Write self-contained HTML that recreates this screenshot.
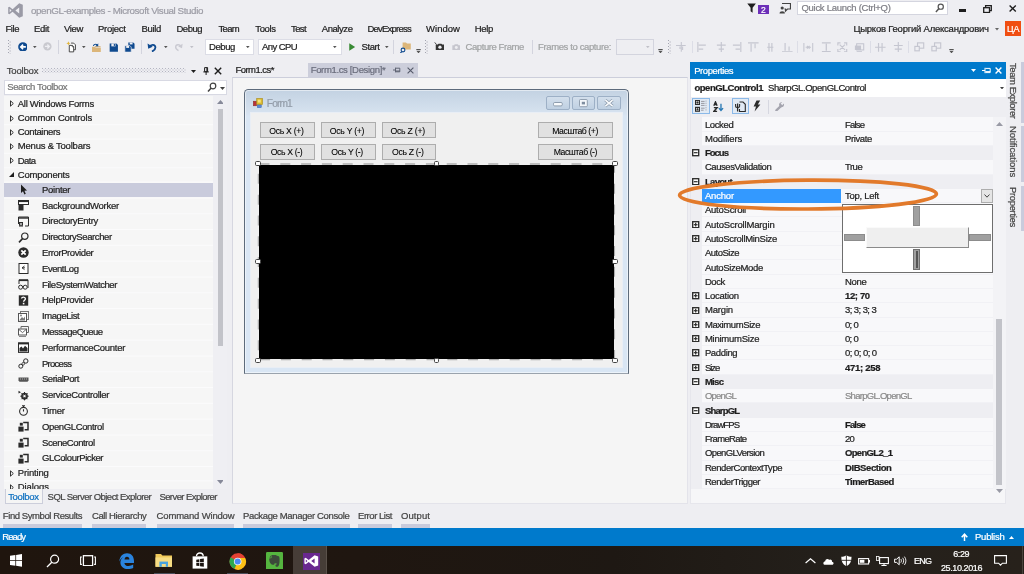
<!DOCTYPE html>
<html><head><meta charset="utf-8"><title>openGL-examples - Microsoft Visual Studio</title>
<style>
*{box-sizing:border-box;margin:0;padding:0}
html,body{width:1024px;height:574px;overflow:hidden;background:#eeeef2}
body{font-family:"Liberation Sans",sans-serif;font-size:9.5px;color:#1e1e1e}
#root{position:relative;width:1024px;height:574px;background:#eeeef2;overflow:hidden;will-change:transform}
.a{position:absolute}
.t{position:absolute;white-space:nowrap;line-height:12px;height:12px;-webkit-text-stroke:0.22px currentColor}
</style></head><body>
<div id="root">
<svg class="a" style="left:6.6px;top:2.4px;" width="17" height="17" viewBox="0 0 17 17"><path d="M12.2 1.2 L15.8 2.8 L15.8 14.2 L12.2 15.8 L5.6 9.8 L2.4 12.3 L1.2 11.7 L1.2 5.3 L2.4 4.7 L5.6 7.2 Z M12.2 5.4 L8.4 8.5 L12.2 11.6 Z M2.7 6.8 L2.7 10.2 L4.5 8.5 Z" fill="#9a9aa6" fill-rule="evenodd"/></svg>
<svg class="a" style="left:747.2px;top:3.2px;" width="9.2" height="10.2" viewBox="0 0 9.2 10.2"><path d="M0.3 0.6 H8.9 L5.6 4.8 V9.8 L3.6 8.2 V4.8 Z" fill="#1e1e1e"/></svg>
<div class="a" style="left:758px;top:5px;width:10.6px;height:9.2px;background:#6c2fb8;"></div>
<svg class="a" style="left:778.6px;top:2.4px;" width="12.4" height="11.4" viewBox="0 0 12.4 11.4"><path d="M3 1.5 H11.5 V7 H8.5 L6.5 9 V7 H5.5" fill="none" stroke="#424242" stroke-width="1.2"/><circle cx="3.2" cy="6" r="1.6" fill="#424242"/><path d="M0.5 11.5 C0.5 8.6 5.9 8.6 5.9 11.5 Z" fill="#424242"/></svg>
<div class="a" style="left:797.2px;top:1px;width:150.4px;height:14.4px;background:#fff;border:1px solid #d4d5df"></div>
<svg class="a" style="left:935px;top:2.6px;" width="9.6" height="10.4" viewBox="0 0 11 12"><circle cx="6.6" cy="4.2" r="3" fill="none" stroke="#555" stroke-width="1.4"/><path d="M4.6 6.4 L1 10.4" stroke="#555" stroke-width="1.7"/></svg>
<div class="a" style="left:959px;top:9px;width:7.3px;height:2.6px;background:#1e1e1e;"></div>
<svg class="a" style="left:983.4px;top:4.5px;" width="9" height="8.2" viewBox="0 0 9 8.2"><path d="M2.6 2.4 V0.7 H8.3 V5.6 H6.8" fill="none" stroke="#1e1e1e" stroke-width="1.3"/><rect x="0.7" y="2.7" width="5.8" height="4.8" fill="none" stroke="#1e1e1e" stroke-width="1.3"/></svg>
<svg class="a" style="left:1009.4px;top:5.4px;" width="7.4" height="7" viewBox="0 0 7.4 7"><path d="M0.6 0.6 L6.8 6.4 M6.8 0.6 L0.6 6.4" stroke="#1e1e1e" stroke-width="1.4"/></svg>
<svg class="a" style="left:995.4px;top:28.2px;" width="4" height="2.4" viewBox="0 0 4 2.4"><path d="M0 0 H4 L2 2.4 Z" fill="#666"/></svg>
<div class="a" style="left:1005.3px;top:21.4px;width:15.7px;height:14.8px;background:#f04e12;"></div>
<svg class="a" style="left:7.6px;top:40px;" width="3" height="14" viewBox="0 0 3 14"><rect x="0" y="0" width="1" height="1" fill="#a3a4b0"/><rect x="1.6" y="1.5" width="1" height="1" fill="#a3a4b0"/><rect x="0" y="3" width="1" height="1" fill="#a3a4b0"/><rect x="1.6" y="4.5" width="1" height="1" fill="#a3a4b0"/><rect x="0" y="6" width="1" height="1" fill="#a3a4b0"/><rect x="1.6" y="7.5" width="1" height="1" fill="#a3a4b0"/><rect x="0" y="9" width="1" height="1" fill="#a3a4b0"/><rect x="1.6" y="10.5" width="1" height="1" fill="#a3a4b0"/><rect x="0" y="12" width="1" height="1" fill="#a3a4b0"/><rect x="1.6" y="13.5" width="1" height="1" fill="#a3a4b0"/></svg>
<svg class="a" style="left:17.5px;top:41.6px;" width="9.8" height="9.8" viewBox="0 0 11 11"><circle cx="5.5" cy="5.5" r="5.3" fill="#0f4a8f"/><path d="M8.8 5.5 H3.4 M5.7 2.9 L3.1 5.5 L5.7 8.1" stroke="#fff" stroke-width="1.8" fill="none"/></svg>
<svg class="a" style="left:33.3px;top:46.3px;" width="3.6" height="2.2" viewBox="0 0 5 3"><path d="M0 0 H5 L2.5 3 Z" fill="#555"/></svg>
<svg class="a" style="left:43.1px;top:42.1px;" width="8.8" height="8.8" viewBox="0 0 11 11"><circle cx="5.5" cy="5.5" r="5.2" fill="#c9c9cf"/><path d="M2.4 5.5 H7.6 M5.4 3 L7.9 5.5 L5.4 8" stroke="#eeeef2" stroke-width="1.7" fill="none"/></svg>
<div class="a" style="left:58.2px;top:40px;width:1px;height:14px;background:#d3d4de;"></div>
<svg class="a" style="left:65.6px;top:41.4px;" width="10.8" height="11.4" viewBox="0 0 12 13"><path d="M5.6 2.4 H8.6 L10.6 4.4 V10 H5.6" fill="#fff" stroke="#333" stroke-width="1"/><path d="M3.6 5 H7.2 L8.6 6.4 V12.4 H3.6 Z" fill="#fff" stroke="#333" stroke-width="1"/><path d="M7 5 V6.6 H8.6" fill="none" stroke="#333" stroke-width="0.8"/><path d="M2.6 0.2 L3.3 1.9 L5 2.6 L3.3 3.3 L2.6 5 L1.9 3.3 L0.2 2.6 L1.9 1.9 Z" fill="#e2b53a"/></svg>
<svg class="a" style="left:82.3px;top:46.3px;" width="3.6" height="2.2" viewBox="0 0 5 3"><path d="M0 0 H5 L2.5 3 Z" fill="#555"/></svg>
<svg class="a" style="left:91.4px;top:41.8px;" width="10.8" height="10.4" viewBox="0 0 13 13"><path d="M1 6 H4.6 L5.6 7 H12 V12.4 H1 Z" fill="#dcb67a"/><path d="M4.4 6.4 H11.6 V5.2 H5.4 Z" fill="#c9a265"/><path d="M2.2 5 C2.6 2.2 5.8 1.2 7.8 2.8 L8.8 1.6 V5.2 H5.2 L6.5 4 C5.4 3.2 3.8 3.6 3.4 5 Z" fill="#0f4a8f"/></svg>
<svg class="a" style="left:108.5px;top:42.6px;" width="9.6" height="9.2" viewBox="0 0 12 12"><path d="M0.6 0.6 H9.4 L11.4 2.6 V11.4 H0.6 Z" fill="#0f4a8f"/><rect x="2.8" y="0.6" width="5.4" height="3.8" fill="#eeeef2"/><rect x="6" y="1.2" width="1.5" height="2.6" fill="#0f4a8f"/></svg>
<svg class="a" style="left:124px;top:41.6px;" width="11.4" height="10.6" viewBox="0 0 14 14"><path d="M5.2 0.6 H11.6 L13.4 2.4 V8.8 H5.2 Z" fill="#0f4a8f"/><rect x="7" y="0.6" width="3.8" height="2.6" fill="#eeeef2"/><path d="M0.6 4.8 H7.2 L9 6.6 V13.4 H0.6 Z" fill="#0f4a8f" stroke="#eeeef2" stroke-width="0.9"/><rect x="2.4" y="5.2" width="3.8" height="2.6" fill="#eeeef2"/></svg>
<div class="a" style="left:141px;top:40px;width:1px;height:14px;background:#d3d4de;"></div>
<svg class="a" style="left:147px;top:42px;" width="10.4" height="10.2" viewBox="0 0 13 13"><path d="M3.4 6.2 C4.6 2.6 10.4 2.6 10.6 6.8 C10.7 9.6 8.4 11 6.2 12.2" fill="none" stroke="#0f4a8f" stroke-width="2.3"/><path d="M0.6 2 L1.4 8.6 L7.2 6 Z" fill="#0f4a8f"/></svg>
<svg class="a" style="left:164.3px;top:46.3px;" width="3.6" height="2.2" viewBox="0 0 5 3"><path d="M0 0 H5 L2.5 3 Z" fill="#555"/></svg>
<svg class="a" style="left:174.4px;top:42.2px;" width="9" height="9.6" viewBox="0 0 13 13"><path d="M9.8 6.2 C8.5 2.5 2.5 2.6 2.4 6.8 C2.3 9.5 4.5 11 6.5 12" fill="none" stroke="#cacad2" stroke-width="2"/><path d="M12.4 2.2 L11.6 8.6 L6 6 Z" fill="#cacad2"/></svg>
<svg class="a" style="left:190.3px;top:46.3px;" width="3.6" height="2.2" viewBox="0 0 5 3"><path d="M0 0 H5 L2.5 3 Z" fill="#c0c0c8"/></svg>
<div class="a" style="left:205px;top:39px;width:49px;height:16px;background:#fff;border:1px solid #dcdde6"></div>
<svg class="a" style="left:246.3px;top:46.3px;" width="3.6" height="2.2" viewBox="0 0 5 3"><path d="M0 0 H5 L2.5 3 Z" fill="#555"/></svg>
<div class="a" style="left:258px;top:39px;width:84px;height:16px;background:#fff;border:1px solid #dcdde6"></div>
<svg class="a" style="left:333.3px;top:46.3px;" width="3.6" height="2.2" viewBox="0 0 5 3"><path d="M0 0 H5 L2.5 3 Z" fill="#555"/></svg>
<svg class="a" style="left:349.4px;top:42.8px;" width="6.4" height="8" viewBox="0 0 8 10"><path d="M0.3 0.3 L7.7 5 L0.3 9.7 Z" fill="#388a34"/></svg>
<svg class="a" style="left:385.3px;top:46.3px;" width="3.6" height="2.2" viewBox="0 0 5 3"><path d="M0 0 H5 L2.5 3 Z" fill="#555"/></svg>
<div class="a" style="left:393px;top:40px;width:1px;height:14px;background:#d3d4de;"></div>
<svg class="a" style="left:399.6px;top:41.6px;" width="11" height="11.2" viewBox="0 0 11 11.2"><path d="M2.6 0.4 H6 L7 1.4 H10.8 V7.6 H2.6 Z" fill="#dcb67a"/><circle cx="3" cy="8" r="1.9" fill="#eeeef2" stroke="#0f4a8f" stroke-width="1.1"/><path d="M1.8 9.6 L0.4 11" stroke="#0f4a8f" stroke-width="1.2"/></svg>
<svg class="a" style="left:416.2px;top:48.8px;" width="5" height="4.4" viewBox="0 0 5 5"><path d="M0 0 H5 V1 H0 Z M0 2 H5 L2.5 5 Z" fill="#555"/></svg>
<svg class="a" style="left:424.6px;top:40px;" width="3" height="14" viewBox="0 0 3 14"><rect x="0" y="0" width="1" height="1" fill="#a3a4b0"/><rect x="1.6" y="1.5" width="1" height="1" fill="#a3a4b0"/><rect x="0" y="3" width="1" height="1" fill="#a3a4b0"/><rect x="1.6" y="4.5" width="1" height="1" fill="#a3a4b0"/><rect x="0" y="6" width="1" height="1" fill="#a3a4b0"/><rect x="1.6" y="7.5" width="1" height="1" fill="#a3a4b0"/><rect x="0" y="9" width="1" height="1" fill="#a3a4b0"/><rect x="1.6" y="10.5" width="1" height="1" fill="#a3a4b0"/><rect x="0" y="12" width="1" height="1" fill="#a3a4b0"/><rect x="1.6" y="13.5" width="1" height="1" fill="#a3a4b0"/></svg>
<svg class="a" style="left:433.6px;top:41.8px;" width="10.4" height="8.2" viewBox="0 0 12 9.5"><path d="M0.6 0.4 L3 2.8" stroke="#333" stroke-width="1.1"/><path d="M2 3 H4.4 L5.2 2 H8.6 L9.4 3 H11.6 V9.2 H2 Z" fill="#333"/><circle cx="6.9" cy="6" r="1.9" fill="#eeeef2"/></svg>
<svg class="a" style="left:451.6px;top:43.8px;" width="8.6" height="6.2" viewBox="0 0 10 7.2"><path d="M0.4 1.4 H2.4 L3.2 0.4 H6.8 L7.6 1.4 H9.6 V7 H0.4 Z" fill="#c6c6ce"/><circle cx="5" cy="4.1" r="1.7" fill="#eeeef2"/></svg>
<div class="a" style="left:532px;top:40px;width:1px;height:14px;background:#d3d4de;"></div>
<div class="a" style="left:616px;top:39px;width:38px;height:16px;background:#eeeef2;border:1px solid #d3d4de"></div>
<svg class="a" style="left:646.3px;top:46.3px;" width="3.6" height="2.2" viewBox="0 0 5 3"><path d="M0 0 H5 L2.5 3 Z" fill="#c0c0c8"/></svg>
<svg class="a" style="left:658.4px;top:48.8px;" width="5" height="4.4" viewBox="0 0 5 5"><path d="M0 0 H5 V1 H0 Z M0 2 H5 L2.5 5 Z" fill="#555"/></svg>
<svg class="a" style="left:668px;top:40px;" width="3" height="14" viewBox="0 0 3 14"><rect x="0" y="0" width="1" height="1" fill="#a3a4b0"/><rect x="1.6" y="1.5" width="1" height="1" fill="#a3a4b0"/><rect x="0" y="3" width="1" height="1" fill="#a3a4b0"/><rect x="1.6" y="4.5" width="1" height="1" fill="#a3a4b0"/><rect x="0" y="6" width="1" height="1" fill="#a3a4b0"/><rect x="1.6" y="7.5" width="1" height="1" fill="#a3a4b0"/><rect x="0" y="9" width="1" height="1" fill="#a3a4b0"/><rect x="1.6" y="10.5" width="1" height="1" fill="#a3a4b0"/><rect x="0" y="12" width="1" height="1" fill="#a3a4b0"/><rect x="1.6" y="13.5" width="1" height="1" fill="#a3a4b0"/></svg>
<svg class="a" style="left:676px;top:41.8px;" width="10.6" height="10.6" viewBox="0 0 12 12"><path d="M0 4 H11 M6 0 V11 M7.5 5 V9 M4.5 5 V8" stroke="#c5c6d0" stroke-width="1.2" fill="none"/></svg>
<div class="a" style="left:692px;top:41px;width:1px;height:12px;background:#dcdde6;"></div>
<svg class="a" style="left:697px;top:41.8px;" width="10.6" height="10.6" viewBox="0 0 12 12"><path d="M1 0 V12 M2 3.5 H10 M2 8 H7" stroke="#c5c6d0" stroke-width="1.3" fill="none"/></svg>
<svg class="a" style="left:716px;top:41.8px;" width="10.6" height="10.6" viewBox="0 0 12 12"><path d="M6 0 V12 M1 3.5 H11 M3 8 H9" stroke="#c5c6d0" stroke-width="1.3" fill="none"/></svg>
<svg class="a" style="left:732px;top:41.8px;" width="10.6" height="10.6" viewBox="0 0 12 12"><path d="M10 0 V12 M1 3.5 H9 M4 8 H9" stroke="#c5c6d0" stroke-width="1.3" fill="none"/></svg>
<svg class="a" style="left:748px;top:41.8px;" width="10.6" height="10.6" viewBox="0 0 12 12"><path d="M0 1 H12 M3.5 2 V11 M8 2 V7" stroke="#c5c6d0" stroke-width="1.3" fill="none"/></svg>
<svg class="a" style="left:765.4px;top:41.8px;" width="10.6" height="10.6" viewBox="0 0 12 12"><path d="M2.5 6 H9.5 M4.5 1 V11 M7.8 1 V11" stroke="#c5c6d0" stroke-width="1.3" fill="none"/></svg>
<svg class="a" style="left:782px;top:41.8px;" width="10.6" height="10.6" viewBox="0 0 12 12"><path d="M0 11 H12 M3.5 1 V10 M8 5 V10" stroke="#c5c6d0" stroke-width="1.3" fill="none"/></svg>
<div class="a" style="left:797px;top:41px;width:1px;height:12px;background:#dcdde6;"></div>
<svg class="a" style="left:803px;top:41.8px;" width="10.6" height="10.6" viewBox="0 0 12 12"><path d="M1 1 V11 M11 1 V11 M3 6 H9 M4.5 4.5 L7.5 7.5 M7.5 4.5 L4.5 7.5" stroke="#c5c6d0" stroke-width="1.2" fill="none"/></svg>
<svg class="a" style="left:821px;top:41.8px;" width="10.6" height="10.6" viewBox="0 0 12 12"><path d="M1 1 H11 M1 11 H11 M6 2 V10" stroke="#c5c6d0" stroke-width="1.4" fill="none"/></svg>
<svg class="a" style="left:837px;top:41.8px;" width="10.6" height="10.6" viewBox="0 0 12 12"><path d="M1 4 V1 H4 M8 1 H11 V4 M11 8 V11 H8 M4 11 H1 V8 M3 3 L9 9 M9 3 L3 9" stroke="#c5c6d0" stroke-width="1.3" fill="none"/></svg>
<svg class="a" style="left:854px;top:41.8px;" width="10.6" height="10.6" viewBox="0 0 12 12"><rect x="3" y="2" width="8" height="7" fill="none" stroke="#c5c6d0" stroke-width="1.2"/><rect x="1" y="4" width="7" height="5" fill="#c5c6d0"/><path d="M3 11 H9" stroke="#c5c6d0" stroke-width="1.2"/></svg>
<div class="a" style="left:870px;top:41px;width:1px;height:12px;background:#dcdde6;"></div>
<svg class="a" style="left:875px;top:41.8px;" width="10.6" height="10.6" viewBox="0 0 12 12"><path d="M0 6 H12 M4 1 V11 M8 1 V11" stroke="#c5c6d0" stroke-width="1.3" fill="none"/></svg>
<svg class="a" style="left:892.5px;top:41.8px;" width="10.6" height="10.6" viewBox="0 0 12 12"><path d="M6 0 V12 M1 4 H11 M2 8 H10" stroke="#c5c6d0" stroke-width="1.3" fill="none"/></svg>
<div class="a" style="left:908px;top:41px;width:1px;height:12px;background:#dcdde6;"></div>
<svg class="a" style="left:914px;top:41.8px;" width="10.6" height="10.6" viewBox="0 0 12 12"><rect x="4" y="1" width="7" height="6" fill="none" stroke="#c5c6d0" stroke-width="1.3"/><rect x="1" y="5" width="5" height="5" fill="#eeeef2" stroke="#c5c6d0" stroke-width="1.3"/></svg>
<svg class="a" style="left:931px;top:41.8px;" width="10.6" height="10.6" viewBox="0 0 12 12"><rect x="4" y="1" width="7" height="6" fill="none" stroke="#c5c6d0" stroke-width="1.3"/><rect x="1" y="5" width="5" height="5" fill="#eeeef2" stroke="#c5c6d0" stroke-width="1.3"/></svg>
<svg class="a" style="left:948.6px;top:48.8px;" width="5" height="4.4" viewBox="0 0 5 5"><path d="M0 0 H5 V1 H0 Z M0 2 H5 L2.5 5 Z" fill="#555"/></svg>
<div class="a" style="left:42px;top:68px;width:144px;height:5px;background-image:radial-gradient(circle at 0.5px 0.5px,#b4b5c2 0.55px,transparent 0.7px),radial-gradient(circle at 0.5px 0.5px,#b4b5c2 0.55px,transparent 0.7px);background-size:3px 3px,3px 3px;background-position:0 0,1.5px 1.5px"></div>
<svg class="a" style="left:191px;top:70px;" width="5" height="3" viewBox="0 0 5 3"><path d="M0 0 H5 L2.5 3 Z" fill="#1e1e1e"/></svg>
<svg class="a" style="left:203.2px;top:66.6px;" width="6.2" height="8.6" viewBox="0 0 6.2 8.6"><path d="M1.6 0.6 H4.6 V4.7 H1.6 Z M3.9 0.6 V4.7 M0.3 4.9 H5.9 M3.1 4.9 V8.4" stroke="#1e1e1e" stroke-width="1" fill="none"/></svg>
<svg class="a" style="left:214px;top:67px;" width="8" height="8" viewBox="0 0 8 8"><path d="M0.8 0.8 L7.2 7.2 M7.2 0.8 L0.8 7.2" stroke="#1e1e1e" stroke-width="1.4"/></svg>
<div class="a" style="left:4px;top:80px;width:223px;height:14.5px;background:#fff;border:1px solid #d8d9e3"></div>
<svg class="a" style="left:207px;top:82px;" width="10" height="11" viewBox="0 0 10 11"><circle cx="6" cy="4" r="2.8" fill="none" stroke="#424242" stroke-width="1.2"/><path d="M4.2 6 L1 9.6" stroke="#424242" stroke-width="1.5"/></svg>
<svg class="a" style="left:220px;top:87px;" width="5" height="3" viewBox="0 0 5 3"><path d="M0 0 H5 L2.5 3 Z" fill="#424242"/></svg>
<div class="a" style="left:4px;top:96px;width:209px;height:393px;background:#f6f6f6;"></div>
<div class="a" style="left:212.6px;top:96px;width:14.4px;height:393px;background:#efeff3;"></div>
<svg class="a" style="left:217px;top:100.2px;" width="6.4" height="4.2" viewBox="0 0 6.4 4.2"><path d="M0 4 L3.5 0 L7 4 Z" fill="#868999"/></svg>
<svg class="a" style="left:217px;top:480.4px;" width="6.4" height="4.2" viewBox="0 0 6.4 4.2"><path d="M0 0 L3.5 4 L7 0 Z" fill="#868999"/></svg>
<div class="a" style="left:217.6px;top:108.8px;width:5.6px;height:237px;background:#c2c3c9;"></div>
<svg class="a" style="left:4px;top:96px" width="209" height="393" viewBox="0 0 209 393"><path d="M0 14.3 H209 M0 28.7 H209 M0 43.1 H209 M0 57.4 H209 M0 71.8 H209 M0 86.1 H209 M0 102.0 H209 M0 117.8 H209 M0 133.6 H209 M0 149.4 H209 M0 165.2 H209 M0 181.0 H209 M0 196.8 H209 M0 212.6 H209 M0 228.4 H209 M0 244.2 H209 M0 260.0 H209 M0 275.8 H209 M0 291.6 H209 M0 307.4 H209 M0 323.2 H209 M0 339.0 H209 M0 354.8 H209 M0 370.6 H209 M0 384.9 H209 M0 399.2 H209" stroke="#fbfbfc" stroke-width="1"/></svg>
<div class="a" style="left:4px;top:183px;width:208.6px;height:13.8px;background:#c9cbdc;"></div>
<svg class="a" style="left:9.5px;top:100.4px;" width="4" height="7" viewBox="0 0 4 7"><path d="M0.5 0.8 L3.3 3.5 L0.5 6.2 Z" fill="none" stroke="#1e1e1e" stroke-width="0.9"/></svg>
<svg class="a" style="left:9.5px;top:114.5px;" width="4" height="7" viewBox="0 0 4 7"><path d="M0.5 0.8 L3.3 3.5 L0.5 6.2 Z" fill="none" stroke="#1e1e1e" stroke-width="0.9"/></svg>
<svg class="a" style="left:9.5px;top:128.7px;" width="4" height="7" viewBox="0 0 4 7"><path d="M0.5 0.8 L3.3 3.5 L0.5 6.2 Z" fill="none" stroke="#1e1e1e" stroke-width="0.9"/></svg>
<svg class="a" style="left:9.5px;top:142.8px;" width="4" height="7" viewBox="0 0 4 7"><path d="M0.5 0.8 L3.3 3.5 L0.5 6.2 Z" fill="none" stroke="#1e1e1e" stroke-width="0.9"/></svg>
<svg class="a" style="left:9.5px;top:157px;" width="4" height="7" viewBox="0 0 4 7"><path d="M0.5 0.8 L3.3 3.5 L0.5 6.2 Z" fill="none" stroke="#1e1e1e" stroke-width="0.9"/></svg>
<svg class="a" style="left:8.5px;top:172.2px;" width="5" height="5" viewBox="0 0 5 5"><path d="M5 0 V5 H0 Z" fill="#1e1e1e"/></svg>
<svg class="a" style="left:9.5px;top:469.9px;" width="4" height="7" viewBox="0 0 4 7"><path d="M0.5 0.8 L3.3 3.5 L0.5 6.2 Z" fill="none" stroke="#1e1e1e" stroke-width="0.9"/></svg>
<div class="a" style="left:4px;top:479px;width:209px;height:10px;overflow:hidden"><div class="t" style="left:13.8px;top:2.4px;font-size:9.5px;letter-spacing:-0.1px">Dialogs</div><svg class="a" style="left:5.5px;top:4.9px" width="4" height="7" viewBox="0 0 4 7"><path d="M0.5 0.8 L3.3 3.5 L0.5 6.2 Z" fill="none" stroke="#1e1e1e" stroke-width="0.9"/></svg></div>
<svg class="a" style="left:18.2px;top:184.1px;" width="11" height="11" viewBox="0 0 11 11"><path d="M3 0.5 V9 L5 7.2 L6.4 10.4 L7.8 9.8 L6.4 6.7 L9 6.5 Z" fill="#1e1e1e"/></svg>
<svg class="a" style="left:18.2px;top:199.9px;" width="11" height="11" viewBox="0 0 11 11"><rect x="0.5" y="0.5" width="10" height="4" fill="#fff" stroke="#2b2b2b"/><rect x="0.5" y="0.5" width="10" height="1.6" fill="#2b2b2b"/><rect x="0.5" y="5" width="5" height="5.5" fill="#2b2b2b"/></svg>
<svg class="a" style="left:18.2px;top:215.7px;" width="11" height="11" viewBox="0 0 11 11"><path d="M0.5 8 V1 H10.5 V10 H7" fill="none" stroke="#2b2b2b"/><path d="M0.5 2 H10.5" stroke="#2b2b2b" stroke-width="1.4"/><path d="M1 6 H5 V10.5 H1 Z" fill="#2b2b2b"/><path d="M2 7 L4 9.5 M4 7 L2 9.5" stroke="#f6f6f6" stroke-width="0.7"/></svg>
<svg class="a" style="left:18.2px;top:231.5px;" width="11" height="11" viewBox="0 0 11 11"><circle cx="6.8" cy="4.2" r="3.2" fill="none" stroke="#2b2b2b" stroke-width="1.2"/><path d="M4.5 6.6 L1 10.4" stroke="#2b2b2b" stroke-width="1.6"/></svg>
<svg class="a" style="left:18.2px;top:247.3px;" width="11" height="11" viewBox="0 0 11 11"><circle cx="5.5" cy="5.5" r="5.2" fill="#2b2b2b"/><path d="M3.3 3.3 L7.7 7.7 M7.7 3.3 L3.3 7.7" stroke="#fff" stroke-width="1.7"/></svg>
<svg class="a" style="left:18.2px;top:263.1px;" width="11" height="11" viewBox="0 0 11 11"><rect x="1" y="0.5" width="9" height="10" fill="#fff" stroke="#2b2b2b"/><path d="M6.5 3 L4 4.8 L6.5 6.6 M4 4.8 H7" stroke="#2b2b2b" stroke-width="0.9" fill="none"/></svg>
<svg class="a" style="left:18.2px;top:278.9px;" width="11" height="11" viewBox="0 0 11 11"><path d="M1 5 V0.8 H10 V9" fill="none" stroke="#2b2b2b"/><path d="M1 1.4 H10" stroke="#2b2b2b" stroke-width="1.4"/><circle cx="2.6" cy="8.2" r="2" fill="none" stroke="#2b2b2b"/><circle cx="7.2" cy="8.2" r="2" fill="none" stroke="#2b2b2b"/><path d="M4.4 7.6 H5.4" stroke="#2b2b2b"/></svg>
<svg class="a" style="left:18.2px;top:294.7px;" width="11" height="11" viewBox="0 0 11 11"><rect x="0.8" y="0.3" width="9.4" height="10.4" fill="#2b2b2b"/><path d="M3.6 3.6 C3.6 1.6 7.4 1.6 7.4 3.8 C7.4 5.2 5.6 5.2 5.6 6.8" fill="none" stroke="#fff" stroke-width="1.4"/><rect x="4.8" y="7.8" width="1.6" height="1.6" fill="#fff"/></svg>
<svg class="a" style="left:18.2px;top:310.5px;" width="11" height="11" viewBox="0 0 11 11"><rect x="2.5" y="0.5" width="8" height="8" fill="none" stroke="#777"/><rect x="0.5" y="2.5" width="8" height="8" fill="#fff" stroke="#555"/><path d="M1.5 9 L4 6 L5.5 7.5 L7 5.5 V9.5 H1.5 Z" fill="#777"/><circle cx="3" cy="4.5" r="0.9" fill="#777"/></svg>
<svg class="a" style="left:18.2px;top:326.3px;" width="11" height="11" viewBox="0 0 11 11"><path d="M3 2.5 V0.5 H10.5 V6.5 H8.8" fill="none" stroke="#666"/><rect x="0.5" y="3" width="8" height="6" fill="#fff" stroke="#555"/><path d="M0.8 3.4 L4.5 6.6 L8.2 3.4" fill="none" stroke="#555" stroke-width="0.9"/><path d="M1 10.5 H8" stroke="#888"/></svg>
<svg class="a" style="left:18.2px;top:342.1px;" width="11" height="11" viewBox="0 0 11 11"><rect x="0.5" y="0.8" width="10" height="9.6" fill="#fff" stroke="#2b2b2b"/><path d="M0.5 1.6 H10.5" stroke="#2b2b2b" stroke-width="1.6"/><path d="M1.5 9.5 V6 L3.5 4.5 L5 6.5 L7 3.8 L9.5 6 V9.5 Z" fill="#2b2b2b"/></svg>
<svg class="a" style="left:18.2px;top:357.9px;" width="11" height="11" viewBox="0 0 11 11"><circle cx="2.8" cy="8.2" r="2" fill="none" stroke="#2b2b2b"/><circle cx="7.8" cy="3" r="2.2" fill="none" stroke="#2b2b2b"/><path d="M4 6.8 L6.2 4.6" stroke="#2b2b2b"/><circle cx="5.2" cy="5.8" r="1.3" fill="#f6f6f6" stroke="#2b2b2b" stroke-width="0.8"/></svg>
<svg class="a" style="left:18.2px;top:373.7px;" width="11" height="11" viewBox="0 0 11 11"><path d="M0.5 3.5 H10.5 V6.5 L9.5 7.8 H1.5 L0.5 6.5 Z" fill="#555"/><path d="M2 5 H9" stroke="#bbb" stroke-width="0.9" stroke-dasharray="1 1"/></svg>
<svg class="a" style="left:18.2px;top:389.5px;" width="11" height="11" viewBox="0 0 11 11"><path d="M0.5 0.8 L3 2.2 L0.5 3.6 Z" fill="#2b2b2b"/><circle cx="6.5" cy="6.2" r="2.6" fill="none" stroke="#2b2b2b" stroke-width="1.5"/><path d="M6.5 2 V10.4 M2.3 6.2 H10.7 M3.5 3.2 L9.5 9.2 M9.5 3.2 L3.5 9.2" stroke="#2b2b2b" stroke-width="1"/><circle cx="6.5" cy="6.2" r="1.1" fill="#f6f6f6"/></svg>
<svg class="a" style="left:18.2px;top:405.3px;" width="11" height="11" viewBox="0 0 11 11"><circle cx="5.5" cy="6.3" r="3.9" fill="none" stroke="#2b2b2b" stroke-width="1.1"/><path d="M4 0.8 H7 M5.5 1 V2.4 M5.5 4.2 V6.5" stroke="#2b2b2b" stroke-width="1.1"/></svg>
<svg class="a" style="left:18.2px;top:421.1px;" width="11" height="11" viewBox="0 0 11 11"><path d="M5.2 1.6 H10 V8.8 H6.6" fill="none" stroke="#2b2b2b" stroke-width="1.5"/><rect x="0.4" y="5.6" width="5.2" height="5" fill="#2b2b2b"/><rect x="1.8" y="1.8" width="3" height="2.8" fill="#2b2b2b"/></svg>
<svg class="a" style="left:18.2px;top:436.9px;" width="11" height="11" viewBox="0 0 11 11"><path d="M5.2 1.6 H10 V8.8 H6.6" fill="none" stroke="#2b2b2b" stroke-width="1.5"/><rect x="0.4" y="5.6" width="5.2" height="5" fill="#2b2b2b"/><rect x="1.8" y="1.8" width="3" height="2.8" fill="#2b2b2b"/></svg>
<svg class="a" style="left:18.2px;top:452.7px;" width="11" height="11" viewBox="0 0 11 11"><path d="M5.2 1.6 H10 V8.8 H6.6" fill="none" stroke="#2b2b2b" stroke-width="1.5"/><rect x="0.4" y="5.6" width="5.2" height="5" fill="#2b2b2b"/><rect x="1.8" y="1.8" width="3" height="2.8" fill="#2b2b2b"/></svg>
<div class="a" style="left:4.5px;top:489px;width:38.5px;height:15px;background:#f5f5f5;border:1px solid #cccedb;border-top:none"></div>
<div class="a" style="left:2.8px;top:524px;width:79.2px;height:3.5px;background:#c9cbdc;"></div>
<div class="a" style="left:91.9px;top:524px;width:54.6px;height:3.5px;background:#c9cbdc;"></div>
<div class="a" style="left:156.6px;top:524px;width:77.8px;height:3.5px;background:#c9cbdc;"></div>
<div class="a" style="left:243px;top:524px;width:106.5px;height:3.5px;background:#c9cbdc;"></div>
<div class="a" style="left:358px;top:524px;width:34px;height:3.5px;background:#c9cbdc;"></div>
<div class="a" style="left:401px;top:524px;width:29px;height:3.5px;background:#c9cbdc;"></div>
<div class="a" style="left:0px;top:527.6px;width:1024px;height:18.4px;background:#007acc;"></div>
<svg class="a" style="left:960.8px;top:532.6px;" width="7" height="8.4" viewBox="0 0 8 9"><path d="M4 9 V2 M0.8 4.6 L4 1 L7.2 4.6" fill="none" stroke="#fff" stroke-width="1.7"/></svg>
<svg class="a" style="left:1009px;top:535.5px;" width="5" height="3" viewBox="0 0 5 3"><path d="M0 3 H5 L2.5 0 Z" fill="#fff"/></svg>
<div class="a" style="left:307.5px;top:62.5px;width:110px;height:15px;background:#ccceDB;"></div>
<svg class="a" style="left:393px;top:67px;" width="8" height="6" viewBox="0 0 8 6"><path d="M0 3 H2.5 M2.5 0.6 V5.4 M3 1.2 H6.8 V4.8 H3 M3 4 H6.8" stroke="#555a6a" stroke-width="0.9" fill="none"/></svg>
<svg class="a" style="left:407px;top:66.5px;" width="7" height="7" viewBox="0 0 7 7"><path d="M0.6 0.6 L6.4 6.4 M6.4 0.6 L0.6 6.4" stroke="#555a6a" stroke-width="1.1"/></svg>
<div class="a" style="left:232.3px;top:77.3px;width:455.7px;height:426.6px;background:#f5f5f5;border:1px solid #e3e3ea;border-left-color:#d6d7e0;border-top:1.4px solid #ccceDB"></div>
<div class="a" style="left:243.8px;top:88.9px;width:385.1px;height:284.9px;border:1.3px solid #5d6b7b;border-bottom:1px solid #9aa3ad;border-right:1.4px solid #5d6b7b;border-radius:4.5px 4.5px 0 0;background:linear-gradient(#c3d2e2 0,#d7e3f0 24px,#d9e6f4 26px,#d9e6f4 100%)"></div>
<div class="a" style="left:245.1px;top:90.2px;width:382.6px;height:282.5px;border:1px solid rgba(255,255,255,.5);border-radius:3px 3px 0 0"></div>
<div class="a" style="left:249.8px;top:112.2px;width:373.2px;height:256.2px;background:#f0f0f0;border:1px solid #e9eef5"></div>
<svg class="a" style="left:252.6px;top:97.9px;" width="10" height="10.2" viewBox="0 0 10 10.2"><rect x="0.3" y="3.2" width="3.4" height="4.6" fill="#b8323a" stroke="#8a2b22" stroke-width="0.5"/><rect x="3.7" y="0.4" width="5.9" height="6.2" fill="#d9b92f" stroke="#a88a20" stroke-width="0.6"/><rect x="4.8" y="1.6" width="3" height="3" fill="#f6e27a"/><rect x="4.2" y="7" width="4.2" height="2.8" fill="#5b8ad8" stroke="#3c66a8" stroke-width="0.4"/></svg>
<div class="a" style="left:546.4px;top:96.3px;width:23.3px;height:13.4px;border:1px solid #9db0c6;border-radius:2px;background:linear-gradient(#d3dfec,#bfd0e2)"></div>
<div class="a" style="left:571.9px;top:96.3px;width:23.3px;height:13.4px;border:1px solid #9db0c6;border-radius:2px;background:linear-gradient(#d3dfec,#bfd0e2)"></div>
<div class="a" style="left:597.3px;top:96.3px;width:23.3px;height:13.4px;border:1px solid #9db0c6;border-radius:2px;background:linear-gradient(#d3dfec,#bfd0e2)"></div>
<svg class="a" style="left:552.8px;top:102.3px;" width="10" height="4.5" viewBox="0 0 10 4.5"><rect x="0.5" y="0.5" width="8.8" height="3.4" rx="1.2" fill="#f8fafc" stroke="#8594a6" stroke-width="0.9"/></svg>
<svg class="a" style="left:579px;top:99px;" width="9" height="8.5" viewBox="0 0 9 8.5"><rect x="0.5" y="0.5" width="7.8" height="7.2" rx="1" fill="#f4f7fb" stroke="#7f8ea0" stroke-width="0.8"/><rect x="2.8" y="2.8" width="3.2" height="2.6" fill="#7f8ea0"/></svg>
<svg class="a" style="left:604px;top:99px;" width="10" height="8.5" viewBox="0 0 10 8.5"><path d="M1.4 1.2 L8.6 7.2 M8.6 1.2 L1.4 7.2" stroke="#8594a6" stroke-width="3"/><path d="M1.4 1.2 L8.6 7.2 M8.6 1.2 L1.4 7.2" stroke="#f8fafc" stroke-width="1.7"/></svg>
<div class="a" style="left:260.2px;top:122.3px;width:54.4px;height:15.6px;background:#e1e1e1;border:1px solid #adadad"></div>
<div class="a" style="left:320.8px;top:122.3px;width:55px;height:15.6px;background:#e1e1e1;border:1px solid #adadad"></div>
<div class="a" style="left:381.8px;top:122.3px;width:54.6px;height:15.6px;background:#e1e1e1;border:1px solid #adadad"></div>
<div class="a" style="left:260.2px;top:144.3px;width:54.4px;height:15.4px;background:#e1e1e1;border:1px solid #adadad"></div>
<div class="a" style="left:320.8px;top:144.3px;width:55px;height:15.4px;background:#e1e1e1;border:1px solid #adadad"></div>
<div class="a" style="left:381.8px;top:144.3px;width:54.6px;height:15.4px;background:#e1e1e1;border:1px solid #adadad"></div>
<div class="a" style="left:538.1px;top:122.3px;width:74.7px;height:15.6px;background:#e1e1e1;border:1px solid #adadad"></div>
<div class="a" style="left:538.1px;top:144.3px;width:74.7px;height:15.4px;background:#e1e1e1;border:1px solid #adadad"></div>
<svg class="a" style="left:256px;top:161px;" width="362" height="202" viewBox="0 0 362 202"><rect x="2.5" y="3.05" width="355.8" height="195.4" fill="none" stroke="#adadad" stroke-width="1.5" stroke-dasharray="10 10.8" stroke-dashoffset="-1"/></svg>
<div class="a" style="left:259px;top:164.8px;width:354.6px;height:193.8px;background:#000;"></div>
<div class="a" style="left:255.3px;top:161.2px;width:5.4px;height:5.2px;background:#fff;border:1px solid #444;border-radius:1.6px"></div>
<div class="a" style="left:255.3px;top:259.2px;width:5.4px;height:5.2px;background:#fff;border:1px solid #444;border-radius:1.6px"></div>
<div class="a" style="left:255.3px;top:357.8px;width:5.4px;height:5.2px;background:#fff;border:1px solid #444;border-radius:1.6px"></div>
<div class="a" style="left:434.1px;top:161.2px;width:5.4px;height:5.2px;background:#fff;border:1px solid #444;border-radius:1.6px"></div>
<div class="a" style="left:434.1px;top:357.8px;width:5.4px;height:5.2px;background:#fff;border:1px solid #444;border-radius:1.6px"></div>
<div class="a" style="left:612.3px;top:161.2px;width:5.4px;height:5.2px;background:#fff;border:1px solid #444;border-radius:1.6px"></div>
<div class="a" style="left:612.3px;top:259.2px;width:5.4px;height:5.2px;background:#fff;border:1px solid #444;border-radius:1.6px"></div>
<div class="a" style="left:612.3px;top:357.8px;width:5.4px;height:5.2px;background:#fff;border:1px solid #444;border-radius:1.6px"></div>
<div class="a" style="left:690.4px;top:62.4px;width:315.6px;height:441.4px;background:#f6f6f8;border:1px solid #e6e6ec"></div>
<div class="a" style="left:690px;top:62.4px;width:316px;height:16.2px;background:#007acc;"></div>
<svg class="a" style="left:971px;top:69px;" width="5" height="3" viewBox="0 0 5 3"><path d="M0 0 H5 L2.5 3 Z" fill="#fff"/></svg>
<svg class="a" style="left:981.5px;top:67px;" width="9" height="7" viewBox="0 0 9 7"><path d="M0 3.5 H3 M3 0.8 V6.2 M3.4 1.4 H8.2 V5.6 H3.4 M3.4 4.6 H8.2" stroke="#fff" stroke-width="1" fill="none"/></svg>
<svg class="a" style="left:995px;top:67px;" width="7" height="7" viewBox="0 0 7 7"><path d="M0.6 0.6 L6.4 6.4 M6.4 0.6 L0.6 6.4" stroke="#fff" stroke-width="1.4"/></svg>
<div class="a" style="left:691px;top:78.6px;width:314.5px;height:18.4px;background:#fff;"></div>
<svg class="a" style="left:999.5px;top:86.5px;" width="4" height="2.5" viewBox="0 0 4 2.5"><path d="M0 0 H4 L2 2.5 Z" fill="#424242"/></svg>
<div class="a" style="left:691px;top:97px;width:314.5px;height:20px;background:#eeeef2;"></div>
<div class="a" style="left:692.3px;top:98.1px;width:17.6px;height:16.4px;background:#e1eaf4;border:1px solid #8bb9e8"></div>
<svg class="a" style="left:695.2px;top:100.2px;" width="12" height="12" viewBox="0 0 12 12"><rect x="0.6" y="0.6" width="3.8" height="3.8" fill="#fff" stroke="#2b2b2b" stroke-width="1.2"/><rect x="0.6" y="7.4" width="3.8" height="3.8" fill="#fff" stroke="#2b2b2b" stroke-width="1.2"/><path d="M1.4 2.5 H3.6 M2.5 1.4 V3.6 M1.4 9.3 H3.6 M2.5 8.2 V10.4" stroke="#2b2b2b" stroke-width="0.9"/><path d="M6 1.4 H9.6 M6 3.4 H9.6 M6 5.4 H9.6 M6 8.2 H9.6 M6 10.2 H8.6" stroke="#9a9aa2" stroke-width="1"/><path d="M11 0.5 V11.4" stroke="#9a9aa2" stroke-width="0.8" stroke-dasharray="1.2 1"/></svg>
<svg class="a" style="left:712.6px;top:100.6px;" width="11.4" height="11.6" viewBox="0 0 12 12"><path d="M0.9 5 L2.6 0.9 L4.3 5 M1.5 3.7 H3.7" fill="none" stroke="#2b2b2b" stroke-width="1.5"/><path d="M0.9 6.9 H4.3 L0.9 10.9 H4.3" fill="none" stroke="#2b2b2b" stroke-width="1.5"/><path d="M8.4 2.8 V9.8 M6.2 7.4 L8.4 10 L10.6 7.4" fill="none" stroke="#2878b4" stroke-width="1.4"/></svg>
<div class="a" style="left:732px;top:98.1px;width:17.2px;height:16.4px;background:#e1eaf4;border:1px solid #8bb9e8"></div>
<svg class="a" style="left:735px;top:100.5px;" width="11" height="12" viewBox="0 0 11 12"><path d="M4.5 1 H8 L10.3 3.3 V10.5 H4.5 V8" fill="none" stroke="#2b2b2b" stroke-width="1.1"/><path d="M2.6 2.5 V10.5" stroke="#2b2b2b" stroke-width="1.3"/><path d="M0.6 3 V5.2 C0.6 7 4.6 7 4.6 5.2 V3" fill="none" stroke="#2b2b2b" stroke-width="1.1"/></svg>
<svg class="a" style="left:753px;top:100px;" width="8" height="12" viewBox="0 0 8 12"><path d="M3.5 0.5 H7.2 L4.8 4.6 H7.4 L1.6 11.5 L3 6.6 H0.6 Z" fill="#2b2b2b"/></svg>
<div class="a" style="left:768px;top:99.5px;width:1px;height:14px;background:#d6d7e0;"></div>
<svg class="a" style="left:774.6px;top:101.6px;" width="9.4" height="9" viewBox="0 0 9.4 9"><path d="M1.4 8.4 L5.6 4.4" stroke="#a4a4ae" stroke-width="2.3" stroke-linecap="round"/><path d="M8.9 1.6 L7.2 3.2 L5.6 1.2 L7.2 0.4 C5.2 -0.2 3.6 1.6 4.2 3.4 L5.8 5.2 C7.6 5.8 9.6 4 8.9 1.6 Z" fill="#a4a4ae"/></svg>
<div class="a" style="left:691px;top:117px;width:302px;height:372px;background:#eeeef2;"></div>
<div class="a" style="left:702px;top:117.35px;width:291px;height:14.3px;background:#f8f8fa;border-bottom:1px solid #f1f1f5"></div>
<div class="a" style="left:702px;top:131.65px;width:291px;height:14.3px;background:#f8f8fa;border-bottom:1px solid #f1f1f5"></div>
<svg class="a" style="left:692.3px;top:149.2px;" width="7.4" height="7.4" viewBox="0 0 7.4 7.4"><rect x="0.7" y="0.7" width="6" height="6" fill="#fff" stroke="#2b2b2b" stroke-width="1.35"/><path d="M1.8 3.7 H5.6" stroke="#2b2b2b" stroke-width="1.2"/></svg>
<div class="a" style="left:702px;top:160.25px;width:291px;height:14.3px;background:#f8f8fa;border-bottom:1px solid #f1f1f5"></div>
<svg class="a" style="left:692.3px;top:177.8px;" width="7.4" height="7.4" viewBox="0 0 7.4 7.4"><rect x="0.7" y="0.7" width="6" height="6" fill="#fff" stroke="#2b2b2b" stroke-width="1.35"/><path d="M1.8 3.7 H5.6" stroke="#2b2b2b" stroke-width="1.2"/></svg>
<div class="a" style="left:702px;top:188.85px;width:291px;height:14.3px;background:#f8f8fa;border-bottom:1px solid #f1f1f5"></div>
<div class="a" style="left:701.6px;top:189.2px;width:139.6px;height:13.5px;background:#3399ff;"></div>
<div class="a" style="left:702px;top:203.15px;width:291px;height:14.3px;background:#f8f8fa;border-bottom:1px solid #f1f1f5"></div>
<div class="a" style="left:702px;top:217.45px;width:291px;height:14.3px;background:#f8f8fa;border-bottom:1px solid #f1f1f5"></div>
<svg class="a" style="left:692.3px;top:220.7px;" width="7.4" height="7.4" viewBox="0 0 7.4 7.4"><rect x="0.7" y="0.7" width="6" height="6" fill="#fff" stroke="#2b2b2b" stroke-width="1.35"/><path d="M1.8 3.7 H5.6" stroke="#2b2b2b" stroke-width="1.2"/><path d="M3.7 1.8 V5.6" stroke="#2b2b2b" stroke-width="1.2"/></svg>
<div class="a" style="left:702px;top:231.75px;width:291px;height:14.3px;background:#f8f8fa;border-bottom:1px solid #f1f1f5"></div>
<svg class="a" style="left:692.3px;top:235px;" width="7.4" height="7.4" viewBox="0 0 7.4 7.4"><rect x="0.7" y="0.7" width="6" height="6" fill="#fff" stroke="#2b2b2b" stroke-width="1.35"/><path d="M1.8 3.7 H5.6" stroke="#2b2b2b" stroke-width="1.2"/><path d="M3.7 1.8 V5.6" stroke="#2b2b2b" stroke-width="1.2"/></svg>
<div class="a" style="left:702px;top:246.05px;width:291px;height:14.3px;background:#f8f8fa;border-bottom:1px solid #f1f1f5"></div>
<div class="a" style="left:702px;top:260.35px;width:291px;height:14.3px;background:#f8f8fa;border-bottom:1px solid #f1f1f5"></div>
<div class="a" style="left:702px;top:274.65px;width:291px;height:14.3px;background:#f8f8fa;border-bottom:1px solid #f1f1f5"></div>
<div class="a" style="left:702px;top:288.95px;width:291px;height:14.3px;background:#f8f8fa;border-bottom:1px solid #f1f1f5"></div>
<svg class="a" style="left:692.3px;top:292.2px;" width="7.4" height="7.4" viewBox="0 0 7.4 7.4"><rect x="0.7" y="0.7" width="6" height="6" fill="#fff" stroke="#2b2b2b" stroke-width="1.35"/><path d="M1.8 3.7 H5.6" stroke="#2b2b2b" stroke-width="1.2"/><path d="M3.7 1.8 V5.6" stroke="#2b2b2b" stroke-width="1.2"/></svg>
<div class="a" style="left:702px;top:303.25px;width:291px;height:14.3px;background:#f8f8fa;border-bottom:1px solid #f1f1f5"></div>
<svg class="a" style="left:692.3px;top:306.5px;" width="7.4" height="7.4" viewBox="0 0 7.4 7.4"><rect x="0.7" y="0.7" width="6" height="6" fill="#fff" stroke="#2b2b2b" stroke-width="1.35"/><path d="M1.8 3.7 H5.6" stroke="#2b2b2b" stroke-width="1.2"/><path d="M3.7 1.8 V5.6" stroke="#2b2b2b" stroke-width="1.2"/></svg>
<div class="a" style="left:702px;top:317.55px;width:291px;height:14.3px;background:#f8f8fa;border-bottom:1px solid #f1f1f5"></div>
<svg class="a" style="left:692.3px;top:320.8px;" width="7.4" height="7.4" viewBox="0 0 7.4 7.4"><rect x="0.7" y="0.7" width="6" height="6" fill="#fff" stroke="#2b2b2b" stroke-width="1.35"/><path d="M1.8 3.7 H5.6" stroke="#2b2b2b" stroke-width="1.2"/><path d="M3.7 1.8 V5.6" stroke="#2b2b2b" stroke-width="1.2"/></svg>
<div class="a" style="left:702px;top:331.85px;width:291px;height:14.3px;background:#f8f8fa;border-bottom:1px solid #f1f1f5"></div>
<svg class="a" style="left:692.3px;top:335.1px;" width="7.4" height="7.4" viewBox="0 0 7.4 7.4"><rect x="0.7" y="0.7" width="6" height="6" fill="#fff" stroke="#2b2b2b" stroke-width="1.35"/><path d="M1.8 3.7 H5.6" stroke="#2b2b2b" stroke-width="1.2"/><path d="M3.7 1.8 V5.6" stroke="#2b2b2b" stroke-width="1.2"/></svg>
<div class="a" style="left:702px;top:346.15px;width:291px;height:14.3px;background:#f8f8fa;border-bottom:1px solid #f1f1f5"></div>
<svg class="a" style="left:692.3px;top:349.4px;" width="7.4" height="7.4" viewBox="0 0 7.4 7.4"><rect x="0.7" y="0.7" width="6" height="6" fill="#fff" stroke="#2b2b2b" stroke-width="1.35"/><path d="M1.8 3.7 H5.6" stroke="#2b2b2b" stroke-width="1.2"/><path d="M3.7 1.8 V5.6" stroke="#2b2b2b" stroke-width="1.2"/></svg>
<div class="a" style="left:702px;top:360.45px;width:291px;height:14.3px;background:#f8f8fa;border-bottom:1px solid #f1f1f5"></div>
<svg class="a" style="left:692.3px;top:363.7px;" width="7.4" height="7.4" viewBox="0 0 7.4 7.4"><rect x="0.7" y="0.7" width="6" height="6" fill="#fff" stroke="#2b2b2b" stroke-width="1.35"/><path d="M1.8 3.7 H5.6" stroke="#2b2b2b" stroke-width="1.2"/><path d="M3.7 1.8 V5.6" stroke="#2b2b2b" stroke-width="1.2"/></svg>
<svg class="a" style="left:692.3px;top:378px;" width="7.4" height="7.4" viewBox="0 0 7.4 7.4"><rect x="0.7" y="0.7" width="6" height="6" fill="#fff" stroke="#2b2b2b" stroke-width="1.35"/><path d="M1.8 3.7 H5.6" stroke="#2b2b2b" stroke-width="1.2"/></svg>
<div class="a" style="left:702px;top:389.05px;width:291px;height:14.3px;background:#f8f8fa;border-bottom:1px solid #f1f1f5"></div>
<svg class="a" style="left:692.3px;top:406.6px;" width="7.4" height="7.4" viewBox="0 0 7.4 7.4"><rect x="0.7" y="0.7" width="6" height="6" fill="#fff" stroke="#2b2b2b" stroke-width="1.35"/><path d="M1.8 3.7 H5.6" stroke="#2b2b2b" stroke-width="1.2"/></svg>
<div class="a" style="left:702px;top:417.65px;width:291px;height:14.3px;background:#f8f8fa;border-bottom:1px solid #f1f1f5"></div>
<div class="a" style="left:702px;top:431.95px;width:291px;height:14.3px;background:#f8f8fa;border-bottom:1px solid #f1f1f5"></div>
<div class="a" style="left:702px;top:446.25px;width:291px;height:14.3px;background:#f8f8fa;border-bottom:1px solid #f1f1f5"></div>
<div class="a" style="left:702px;top:460.55px;width:291px;height:14.3px;background:#f8f8fa;border-bottom:1px solid #f1f1f5"></div>
<div class="a" style="left:702px;top:474.85px;width:291px;height:14.3px;background:#f8f8fa;border-bottom:1px solid #f1f1f5"></div>
<div class="a" style="left:993px;top:117px;width:12.5px;height:372px;background:#f3f3f6;"></div>
<svg class="a" style="left:996px;top:121.5px;" width="7" height="4" viewBox="0 0 7 4"><path d="M0 4 L3.5 0 L7 4 Z" fill="#999aa5"/></svg>
<svg class="a" style="left:996px;top:488.5px;" width="7" height="4" viewBox="0 0 7 4"><path d="M0 0 L3.5 4 L7 0 Z" fill="#999aa5"/></svg>
<div class="a" style="left:996.4px;top:319px;width:5.4px;height:165.5px;background:#c2c3c9;"></div>
<div class="a" style="left:980.5px;top:189.4px;width:12.2px;height:13.8px;background:#e5e5e5;border:1px solid #adadad"></div>
<svg class="a" style="left:983.5px;top:194px;" width="6" height="4" viewBox="0 0 6 4"><path d="M0.5 0.5 L3 3.2 L5.5 0.5" fill="none" stroke="#444" stroke-width="1"/></svg>
<div class="a" style="left:841.8px;top:203.6px;width:151.4px;height:69.4px;background:#fff;border:1.2px solid #6e6e6e"></div>
<div class="a" style="left:913.4px;top:205.6px;width:7.1px;height:20.8px;background:#a0a0a0;border:1px solid #8c8c8c"></div>
<div class="a" style="left:843.8px;top:234.4px;width:21.1px;height:7.1px;background:#a0a0a0;border:1px solid #8c8c8c"></div>
<div class="a" style="left:969.2px;top:234.4px;width:21.4px;height:7.1px;background:#a0a0a0;border:1px solid #8c8c8c"></div>
<div class="a" style="left:913.4px;top:249.4px;width:7.1px;height:20.6px;background:#a0a0a0;border:1px solid #707070"></div>
<div class="a" style="left:915.6px;top:251.4px;width:2.8px;height:16.8px;background:#d8d8d8;border:0.6px solid #555"></div>
<div class="a" style="left:865.5px;top:227.1px;width:103.7px;height:21.4px;background:#efefef;border-right:1px solid #8a8a8a;border-bottom:1px solid #8a8a8a;border-top:1px solid #fafafa;border-left:1px solid #fafafa"></div>
<div class="a" style="left:1021px;top:62px;width:3px;height:60.5px;background:#c9cbdc;"></div>
<div class="a" style="left:1021px;top:125.9px;width:3px;height:56.2px;background:#c9cbdc;"></div>
<div class="a" style="left:1021px;top:186.3px;width:3px;height:44.8px;background:#c9cbdc;"></div>
<div class="a" style="left:0;top:545.6px;width:1024px;height:28.4px;background:linear-gradient(90deg,#1f150e 0,#1f1610 35%,#1e1813 60%,#24201b 82%,#27211b 100%)"></div>
<svg class="a" style="left:9.7px;top:554.1px;" width="12.8" height="12.8" viewBox="0 0 13.4 13.4"><path d="M0 1.9 L5.6 1.1 V6.3 H0 Z M6.4 1 L13.4 0 V6.3 H6.4 Z M0 7.1 H5.6 V12.3 L0 11.5 Z M6.4 7.1 H13.4 V13.4 L6.4 12.4 Z" fill="#fff"/></svg>
<svg class="a" style="left:45.5px;top:554px;" width="14" height="14" viewBox="0 0 14 14"><circle cx="8.6" cy="5.2" r="4" fill="none" stroke="#fff" stroke-width="1.2"/><path d="M5.8 8.2 L1 13" stroke="#fff" stroke-width="1.3"/></svg>
<svg class="a" style="left:80.4px;top:555px;" width="16" height="11.4" viewBox="0 0 16 11.4"><rect x="3.4" y="0.7" width="9.2" height="10" fill="none" stroke="#fff" stroke-width="1.3"/><path d="M1.9 2 H0.6 V9.4 H1.9 M14.1 2 H15.4 V9.4 H14.1" fill="none" stroke="#fff" stroke-width="1.1"/></svg>
<svg class="a" style="left:119.4px;top:552.6px;" width="15.2" height="16.2" viewBox="0 0 15.2 16.2"><path d="M0.3 8.5 C0.8 3 4 0.2 8 0.2 C12.5 0.2 15 3.5 15 8 V9.9 H5.4 C5.6 12 7.2 13 9.4 13 C11.2 13 12.8 12.5 14.2 11.6 V15 C12.6 15.7 11 16 9 16 C4.5 16 1.4 13.4 1.4 9.4 C1.4 7 2.6 5 4.6 3.9 C2.6 4.6 1.2 6.2 0.3 8.5 Z M5.5 6.5 H10.4 C10.4 4.7 9.5 3.7 8 3.7 C6.5 3.7 5.7 4.9 5.5 6.5 Z" fill="#2a84de" fill-rule="evenodd"/></svg>
<svg class="a" style="left:155px;top:553px;" width="18" height="14.5" viewBox="0 0 18 14.5"><path d="M0.5 1 H6 L7.4 2.6 H17 V13.8 H0.5 Z" fill="#f0c95a"/><path d="M0.5 4.4 H17 V13.8 H0.5 Z" fill="#f7dd84"/><path d="M4.4 8.6 H13 V13.8 H4.4 Z" fill="#48a3e0"/><path d="M6.8 11 H10.8 V13.8 H6.8 Z" fill="#f7dd84"/></svg>
<svg class="a" style="left:192.3px;top:551.6px;" width="15.8" height="17.4" viewBox="0 0 15.5 16.5"><path d="M4.4 4 C4.4 -0.4 11 -0.4 11 4" fill="none" stroke="#fff" stroke-width="1.3"/><path d="M0.6 4 H15 V16 H0.6 Z" fill="#fff"/><path d="M4.2 7.2 L7.2 6.8 V9.8 H4.2 Z M7.9 6.7 L11.6 6.2 V9.8 H7.9 Z M4.2 10.5 H7.2 V13.5 L4.2 13.1 Z M7.9 10.5 H11.6 V14.1 L7.9 13.6 Z" fill="#1c1511"/></svg>
<svg class="a" style="left:229px;top:552.5px;" width="17.5" height="17" viewBox="0 0 17.5 17"><circle cx="8.7" cy="8.5" r="8.2" fill="#e34133"/><path d="M8.7 8.5 L1.7 4.2 A8.2 8.2 0 0 0 5.6 16.1 Z" fill="#2da94f"/><path d="M8.7 8.5 L5.6 16.1 A8.2 8.2 0 0 0 16.2 5 L9 5 Z" fill="#fbc116"/><path d="M8.7 0.3 A8.2 8.2 0 0 1 16.2 5 L8.7 5 Z" fill="#e34133"/><circle cx="8.7" cy="8.5" r="3.8" fill="#f4f4f4"/><circle cx="8.7" cy="8.5" r="3" fill="#4a8af4"/></svg>
<svg class="a" style="left:265.5px;top:551.5px;" width="17" height="17.8" viewBox="0 0 17 17.8"><rect x="0" y="0" width="17" height="17.8" rx="1.2" fill="#55b53f"/><path d="M5.4 3 H9.6 C10.4 3 10.6 3.8 12 3.9 C13.2 4 13.4 4.6 13.5 6 C13.8 9.6 13.4 13.6 12 14.4 C11 14.9 9.4 14.8 9.4 13.4 C9.4 12.2 10.8 12.8 10.8 12 C10.8 11.2 9.4 11.4 8.6 11.2 C8.6 12.6 7.8 13 6.6 12.8 C4.6 12.4 3.4 10.4 3.2 7.2 C3.2 6.4 3.6 6.2 4.6 6.2 C5.4 6.2 5.6 6 5.6 5 Z" fill="#3c4a3a"/><path d="M3.4 5.6 L5 3.4 V5.2 C5 5.5 4.8 5.6 4.6 5.6 Z" fill="#3c4a3a"/></svg>
<div class="a" style="left:292.8px;top:545.6px;width:34.2px;height:28.4px;background:#463d37;"></div>
<div class="a" style="left:326.4px;top:545.6px;width:0.8px;height:28.4px;background:#5a514a;"></div>
<div class="a" style="left:302.7px;top:552.6px;width:17.1px;height:17.2px;background:#69288f;"></div>
<svg class="a" style="left:304px;top:554.6px;" width="14.6" height="12" viewBox="0 0 14.6 12"><path d="M10.6 0.2 L14.2 1.6 V10.4 L10.6 11.8 L4.7 6.9 L1.7 9.2 L0.4 8.6 V3.4 L1.7 2.8 L4.7 5.1 Z M10.6 3.6 L7.2 6 L10.6 8.4 Z M1.8 4.6 V7.4 L3.4 6 Z" fill="#fff" fill-rule="evenodd"/></svg>
<div class="a" style="left:154px;top:573px;width:21px;height:1px;background:#4a4f5c;"></div>
<div class="a" style="left:227px;top:573px;width:21px;height:1px;background:#4a4f5c;"></div>
<div class="a" style="left:1022px;top:545.6px;width:0.8px;height:28.4px;background:#4a443d;"></div>
<svg class="a" style="left:804.5px;top:558.4px;" width="11" height="5.6" viewBox="0 0 11 5.6"><path d="M0.6 5 L5.5 0.8 L10.4 5" fill="none" stroke="#fff" stroke-width="1.2"/></svg>
<svg class="a" style="left:822.8px;top:556.6px;" width="10.8" height="8.4" viewBox="0 0 11.5 8.2"><path d="M2.6 8 C-0.4 8 -0.2 4.4 2.4 4.2 C2.4 1.6 5.6 1 6.6 2.8 C8 1.8 9.8 2.8 9.6 4.6 C11.8 4.6 11.8 8 9.6 8 Z" fill="#fff"/></svg>
<svg class="a" style="left:841px;top:555px;" width="10.8" height="11.4" viewBox="0 0 11.2 12"><path d="M5.6 0.2 C7.4 1.4 9.2 1.8 11 1.8 C11 6.8 9.4 10 5.6 11.8 C1.8 10 0.2 6.8 0.2 1.8 C2 1.8 3.8 1.4 5.6 0.2 Z" fill="#fff"/><path d="M5.6 0.2 V11.8 M0.4 5.6 H10.8" stroke="#1a1511" stroke-width="0.9"/></svg>
<svg class="a" style="left:858.3px;top:558.2px;" width="12.2" height="6.6" viewBox="0 0 12.2 6.6"><rect x="0.6" y="0.6" width="10" height="5.4" fill="none" stroke="#fff" stroke-width="1.1"/><rect x="1.8" y="1.8" width="4.6" height="3" fill="#fff"/><rect x="11" y="2" width="1.2" height="2.6" fill="#fff"/></svg>
<svg class="a" style="left:876px;top:555.8px;" width="13" height="10.2" viewBox="0 0 13 10.2"><rect x="3.6" y="1.6" width="8.8" height="6" fill="none" stroke="#fff" stroke-width="1.1"/><path d="M8 7.6 V9.4 M5.4 9.6 H10.6" stroke="#fff" stroke-width="1.1"/><rect x="0.4" y="0.4" width="2.6" height="4" fill="none" stroke="#fff" stroke-width="0.8"/></svg>
<svg class="a" style="left:893.8px;top:556.2px;" width="13" height="9.6" viewBox="0 0 13 9.6"><path d="M0.6 3.2 H2.6 L5.2 0.8 V8.8 L2.6 6.4 H0.6 Z" fill="none" stroke="#fff" stroke-width="1"/><path d="M6.8 3 C7.6 4 7.6 5.6 6.8 6.6 M8.6 1.8 C10 3.4 10 6.2 8.6 7.8 M10.4 0.6 C12.4 3 12.4 6.6 10.4 9" fill="none" stroke="#fff" stroke-width="0.9"/></svg>
<svg class="a" style="left:994.3px;top:555px;" width="13" height="11" viewBox="0 0 13 11"><path d="M0.6 0.6 H12.4 V8.2 H8.4 L6.5 10.2 L4.6 8.2 H0.6 Z" fill="none" stroke="#fff" stroke-width="1.1"/></svg>
<div class="t" style="left:31px;top:4.8px;color:#9d9da6;font-size:9.8px;letter-spacing:-0.396px;">openGL-examples - Microsoft Visual Studio</div>
<div class="t" style="left:761px;top:3.8px;color:#fff;font-size:8.5px;">2</div>
<div class="t" style="left:801.4px;top:2.4px;color:#7f7f86;font-size:9.5px;letter-spacing:-0.266px;">Quick Launch (Ctrl+Q)</div>
<div class="t" style="left:853.4px;top:23.2px;color:#1e1e1e;font-size:9.5px;letter-spacing:-0.221px;">Цырков Георгий Александрович</div>
<div class="t" style="left:1006.9px;top:22.8px;color:#fff;font-size:9px;letter-spacing:0.014px;">ЦА</div>
<div class="t" style="left:5.5px;top:22.5px;color:#1e1e1e;font-size:9.5px;letter-spacing:-0.453px;">File</div>
<div class="t" style="left:34px;top:22.5px;color:#1e1e1e;font-size:9.5px;letter-spacing:-0.344px;">Edit</div>
<div class="t" style="left:64px;top:22.5px;color:#1e1e1e;font-size:9.5px;letter-spacing:-0.355px;">View</div>
<div class="t" style="left:98px;top:22.5px;color:#1e1e1e;font-size:9.5px;letter-spacing:-0.297px;">Project</div>
<div class="t" style="left:141.5px;top:22.5px;color:#1e1e1e;font-size:9.5px;letter-spacing:-0.325px;">Build</div>
<div class="t" style="left:176.5px;top:22.5px;color:#1e1e1e;font-size:9.5px;letter-spacing:-0.500px;">Debug</div>
<div class="t" style="left:218.5px;top:22.5px;color:#1e1e1e;font-size:9.5px;letter-spacing:-0.684px;">Team</div>
<div class="t" style="left:255.3px;top:22.5px;color:#1e1e1e;font-size:9.5px;letter-spacing:-0.398px;">Tools</div>
<div class="t" style="left:291px;top:22.5px;color:#1e1e1e;font-size:9.5px;letter-spacing:-0.609px;">Test</div>
<div class="t" style="left:321.8px;top:22.5px;color:#1e1e1e;font-size:9.5px;letter-spacing:-0.445px;">Analyze</div>
<div class="t" style="left:367.4px;top:22.5px;color:#1e1e1e;font-size:9.5px;letter-spacing:-0.762px;">DevExpress</div>
<div class="t" style="left:426px;top:22.5px;color:#1e1e1e;font-size:9.5px;letter-spacing:0.034px;">Window</div>
<div class="t" style="left:474.8px;top:22.5px;color:#1e1e1e;font-size:9.5px;letter-spacing:-0.337px;">Help</div>
<div class="t" style="left:209px;top:41px;color:#1e1e1e;font-size:9.5px;letter-spacing:-0.400px;">Debug</div>
<div class="t" style="left:262px;top:41px;color:#1e1e1e;font-size:9.5px;letter-spacing:-0.583px;">Any CPU</div>
<div class="t" style="left:361.5px;top:41px;color:#1e1e1e;font-size:9.5px;letter-spacing:-0.412px;">Start</div>
<div class="t" style="left:465.5px;top:41px;color:#a2a4a5;font-size:9.5px;letter-spacing:-0.415px;">Capture Frame</div>
<div class="t" style="left:538px;top:41px;color:#a2a4a5;font-size:9.5px;letter-spacing:-0.374px;">Frames to capture:</div>
<div class="t" style="left:6.8px;top:65px;color:#444;font-size:9.5px;letter-spacing:-0.179px;">Toolbox</div>
<div class="t" style="left:7.2px;top:81.3px;color:#757575;font-size:9.5px;letter-spacing:-0.379px;">Search Toolbox</div>
<div class="t" style="left:17.8px;top:97.9px;color:#1e1e1e;font-size:9.5px;letter-spacing:-0.306px;">All Windows Forms</div>
<div class="t" style="left:17.8px;top:112px;color:#1e1e1e;font-size:9.5px;letter-spacing:-0.157px;">Common Controls</div>
<div class="t" style="left:17.8px;top:126.2px;color:#1e1e1e;font-size:9.5px;letter-spacing:-0.355px;">Containers</div>
<div class="t" style="left:17.8px;top:140.3px;color:#1e1e1e;font-size:9.5px;letter-spacing:-0.217px;">Menus &amp; Toolbars</div>
<div class="t" style="left:17.8px;top:154.5px;color:#1e1e1e;font-size:9.5px;letter-spacing:-0.620px;">Data</div>
<div class="t" style="left:17.8px;top:168.7px;color:#1e1e1e;font-size:9.5px;letter-spacing:-0.217px;">Components</div>
<div class="t" style="left:17.8px;top:467.4px;color:#1e1e1e;font-size:9.5px;letter-spacing:-0.165px;">Printing</div>
<div class="t" style="left:42px;top:183.7px;color:#1e1e1e;font-size:9.5px;letter-spacing:-0.273px;">Pointer</div>
<div class="t" style="left:42px;top:199.5px;color:#1e1e1e;font-size:9.5px;letter-spacing:-0.271px;">BackgroundWorker</div>
<div class="t" style="left:42px;top:215.3px;color:#1e1e1e;font-size:9.5px;letter-spacing:-0.299px;">DirectoryEntry</div>
<div class="t" style="left:42px;top:231.1px;color:#1e1e1e;font-size:9.5px;letter-spacing:-0.404px;">DirectorySearcher</div>
<div class="t" style="left:42px;top:246.9px;color:#1e1e1e;font-size:9.5px;letter-spacing:-0.392px;">ErrorProvider</div>
<div class="t" style="left:42px;top:262.7px;color:#1e1e1e;font-size:9.5px;letter-spacing:-0.457px;">EventLog</div>
<div class="t" style="left:42px;top:278.5px;color:#1e1e1e;font-size:9.5px;letter-spacing:-0.412px;">FileSystemWatcher</div>
<div class="t" style="left:42px;top:294.3px;color:#1e1e1e;font-size:9.5px;letter-spacing:-0.293px;">HelpProvider</div>
<div class="t" style="left:42px;top:310.1px;color:#1e1e1e;font-size:9.5px;letter-spacing:-0.432px;">ImageList</div>
<div class="t" style="left:42px;top:325.9px;color:#1e1e1e;font-size:9.5px;letter-spacing:-0.557px;">MessageQueue</div>
<div class="t" style="left:42px;top:341.7px;color:#1e1e1e;font-size:9.5px;letter-spacing:-0.283px;">PerformanceCounter</div>
<div class="t" style="left:42px;top:357.5px;color:#1e1e1e;font-size:9.5px;letter-spacing:-0.733px;">Process</div>
<div class="t" style="left:42px;top:373.3px;color:#1e1e1e;font-size:9.5px;letter-spacing:-0.492px;">SerialPort</div>
<div class="t" style="left:42px;top:389.1px;color:#1e1e1e;font-size:9.5px;letter-spacing:-0.346px;">ServiceController</div>
<div class="t" style="left:42px;top:404.9px;color:#1e1e1e;font-size:9.5px;letter-spacing:-0.264px;">Timer</div>
<div class="t" style="left:42px;top:420.7px;color:#1e1e1e;font-size:9.5px;letter-spacing:-0.373px;">OpenGLControl</div>
<div class="t" style="left:42px;top:436.5px;color:#1e1e1e;font-size:9.5px;letter-spacing:-0.414px;">SceneControl</div>
<div class="t" style="left:42px;top:452.3px;color:#1e1e1e;font-size:9.5px;letter-spacing:-0.426px;">GLColourPicker</div>
<div class="t" style="left:8.2px;top:491.3px;color:#0e70c0;font-size:9.5px;letter-spacing:-0.321px;">Toolbox</div>
<div class="t" style="left:47.6px;top:491.3px;color:#444;font-size:9.5px;letter-spacing:-0.530px;">SQL Server Object Explorer</div>
<div class="t" style="left:159.4px;top:491.3px;color:#444;font-size:9.5px;letter-spacing:-0.573px;">Server Explorer</div>
<div class="t" style="left:2.8px;top:509.7px;color:#444;font-size:9.5px;letter-spacing:-0.417px;">Find Symbol Results</div>
<div class="t" style="left:91.9px;top:509.7px;color:#444;font-size:9.5px;letter-spacing:-0.361px;">Call Hierarchy</div>
<div class="t" style="left:156.6px;top:509.7px;color:#444;font-size:9.5px;letter-spacing:-0.175px;">Command Window</div>
<div class="t" style="left:243px;top:509.7px;color:#444;font-size:9.5px;letter-spacing:-0.353px;">Package Manager Console</div>
<div class="t" style="left:358px;top:509.7px;color:#444;font-size:9.5px;letter-spacing:-0.455px;">Error List</div>
<div class="t" style="left:401px;top:509.7px;color:#444;font-size:9.5px;letter-spacing:0.078px;">Output</div>
<div class="t" style="left:2.2px;top:531px;color:#fff;font-size:9.5px;letter-spacing:-0.894px;">Ready</div>
<div class="t" style="left:975px;top:531px;color:#fff;font-size:9.5px;letter-spacing:-0.239px;">Publish</div>
<div class="t" style="left:235.5px;top:64.2px;color:#1e1e1e;font-size:9.5px;letter-spacing:-0.555px;">Form1.cs*</div>
<div class="t" style="left:310.7px;top:64.2px;color:#6b6e7d;font-size:9.5px;letter-spacing:-0.343px;">Form1.cs [Design]*</div>
<div class="t" style="left:266.8px;top:97.9px;color:#939da9;font-size:10.2px;letter-spacing:-0.887px;">Form1</div>
<div class="t" style="left:269.2px;top:124.6px;color:#000;font-size:8.7px;letter-spacing:-0.301px;-webkit-text-stroke:0.08px #000;">Ось X (+)</div>
<div class="t" style="left:329.8px;top:124.6px;color:#000;font-size:8.7px;letter-spacing:-0.284px;-webkit-text-stroke:0.08px #000;">Ось Y (+)</div>
<div class="t" style="left:390.5px;top:124.6px;color:#000;font-size:8.7px;letter-spacing:-0.247px;-webkit-text-stroke:0.08px #000;">Ось Z (+)</div>
<div class="t" style="left:270.7px;top:146.2px;color:#000;font-size:8.7px;letter-spacing:-0.382px;-webkit-text-stroke:0.08px #000;">Ось X (-)</div>
<div class="t" style="left:331.3px;top:146.2px;color:#000;font-size:8.7px;letter-spacing:-0.365px;-webkit-text-stroke:0.08px #000;">Ось Y (-)</div>
<div class="t" style="left:392px;top:146.2px;color:#000;font-size:8.7px;letter-spacing:-0.328px;-webkit-text-stroke:0.08px #000;">Ось Z (-)</div>
<div class="t" style="left:552.2px;top:124.6px;color:#000;font-size:8.7px;letter-spacing:-0.432px;-webkit-text-stroke:0.08px #000;">Масштаб (+)</div>
<div class="t" style="left:553.7px;top:146.2px;color:#000;font-size:8.7px;letter-spacing:-0.451px;-webkit-text-stroke:0.08px #000;">Масштаб (-)</div>
<div class="t" style="left:694.2px;top:64.5px;color:#fff;font-size:9.5px;letter-spacing:-0.431px;">Properties</div>
<div class="t" style="left:694.4px;top:81.6px;color:#1e1e1e;font-size:9.5px;font-weight:bold;letter-spacing:-0.454px;">openGLControl1</div>
<div class="t" style="left:768px;top:81.6px;color:#1e1e1e;font-size:9.5px;letter-spacing:-0.438px;">SharpGL.OpenGLControl</div>
<div class="t" style="left:704.9px;top:118.5px;color:#1e1e1e;font-size:9.5px;letter-spacing:-0.373px;">Locked</div>
<div class="t" style="left:845px;top:118.5px;color:#1e1e1e;font-size:9.5px;letter-spacing:-0.807px;">False</div>
<div class="t" style="left:704.9px;top:132.8px;color:#1e1e1e;font-size:9.5px;letter-spacing:-0.150px;">Modifiers</div>
<div class="t" style="left:845px;top:132.8px;color:#1e1e1e;font-size:9.5px;letter-spacing:-0.397px;">Private</div>
<div class="t" style="left:704.9px;top:147.1px;color:#1e1e1e;font-size:9.5px;font-weight:bold;letter-spacing:-0.977px;">Focus</div>
<div class="t" style="left:704.9px;top:161.4px;color:#1e1e1e;font-size:9.5px;letter-spacing:-0.427px;">CausesValidation</div>
<div class="t" style="left:845px;top:161.4px;color:#1e1e1e;font-size:9.5px;letter-spacing:-0.497px;">True</div>
<div class="t" style="left:704.9px;top:175.7px;color:#1e1e1e;font-size:9.5px;font-weight:bold;letter-spacing:-0.673px;">Layout</div>
<div class="t" style="left:704.9px;top:190px;color:#fff;font-size:9.5px;letter-spacing:-0.168px;">Anchor</div>
<div class="t" style="left:845px;top:190px;color:#1e1e1e;font-size:9.5px;letter-spacing:-0.273px;">Top, Left</div>
<div class="t" style="left:704.9px;top:204.3px;color:#1e1e1e;font-size:9.5px;letter-spacing:-0.221px;">AutoScroll</div>
<div class="t" style="left:704.9px;top:218.6px;color:#1e1e1e;font-size:9.5px;letter-spacing:-0.171px;">AutoScrollMargin</div>
<div class="t" style="left:704.9px;top:232.9px;color:#1e1e1e;font-size:9.5px;letter-spacing:-0.300px;">AutoScrollMinSize</div>
<div class="t" style="left:704.9px;top:247.2px;color:#1e1e1e;font-size:9.5px;letter-spacing:-0.491px;">AutoSize</div>
<div class="t" style="left:704.9px;top:261.5px;color:#1e1e1e;font-size:9.5px;letter-spacing:-0.316px;">AutoSizeMode</div>
<div class="t" style="left:704.9px;top:275.8px;color:#1e1e1e;font-size:9.5px;letter-spacing:-0.414px;">Dock</div>
<div class="t" style="left:845px;top:275.8px;color:#1e1e1e;font-size:9.5px;letter-spacing:-0.280px;">None</div>
<div class="t" style="left:704.9px;top:290.1px;color:#1e1e1e;font-size:9.5px;letter-spacing:-0.240px;">Location</div>
<div class="t" style="left:845px;top:290.1px;color:#1e1e1e;font-size:9.5px;font-weight:bold;letter-spacing:-0.356px;">12; 70</div>
<div class="t" style="left:704.9px;top:304.4px;color:#1e1e1e;font-size:9.5px;letter-spacing:-0.158px;">Margin</div>
<div class="t" style="left:845px;top:304.4px;color:#1e1e1e;font-size:9.5px;letter-spacing:-0.578px;">3; 3; 3; 3</div>
<div class="t" style="left:704.9px;top:318.7px;color:#1e1e1e;font-size:9.5px;letter-spacing:-0.405px;">MaximumSize</div>
<div class="t" style="left:845px;top:318.7px;color:#1e1e1e;font-size:9.5px;letter-spacing:-0.665px;">0; 0</div>
<div class="t" style="left:704.9px;top:333px;color:#1e1e1e;font-size:9.5px;letter-spacing:-0.238px;">MinimumSize</div>
<div class="t" style="left:845px;top:333px;color:#1e1e1e;font-size:9.5px;letter-spacing:-0.665px;">0; 0</div>
<div class="t" style="left:704.9px;top:347.3px;color:#1e1e1e;font-size:9.5px;letter-spacing:-0.354px;">Padding</div>
<div class="t" style="left:845px;top:347.3px;color:#1e1e1e;font-size:9.5px;letter-spacing:-0.538px;">0; 0; 0; 0</div>
<div class="t" style="left:704.9px;top:361.6px;color:#1e1e1e;font-size:9.5px;letter-spacing:-1.046px;">Size</div>
<div class="t" style="left:845px;top:361.6px;color:#1e1e1e;font-size:9.5px;font-weight:bold;letter-spacing:-0.289px;">471; 258</div>
<div class="t" style="left:704.9px;top:375.9px;color:#1e1e1e;font-size:9.5px;font-weight:bold;letter-spacing:-0.681px;">Misc</div>
<div class="t" style="left:704.9px;top:390.2px;color:#8a8a8a;font-size:9.5px;letter-spacing:-0.787px;">OpenGL</div>
<div class="t" style="left:845px;top:390.2px;color:#8a8a8a;font-size:9.5px;letter-spacing:-0.720px;">SharpGL.OpenGL</div>
<div class="t" style="left:704.9px;top:404.5px;color:#1e1e1e;font-size:9.5px;font-weight:bold;letter-spacing:-0.818px;">SharpGL</div>
<div class="t" style="left:704.9px;top:418.8px;color:#1e1e1e;font-size:9.5px;letter-spacing:-0.922px;">DrawFPS</div>
<div class="t" style="left:845px;top:418.8px;color:#1e1e1e;font-size:9.5px;font-weight:bold;letter-spacing:-0.859px;">False</div>
<div class="t" style="left:704.9px;top:433.1px;color:#1e1e1e;font-size:9.5px;letter-spacing:-0.657px;">FrameRate</div>
<div class="t" style="left:845px;top:433.1px;color:#1e1e1e;font-size:9.5px;letter-spacing:-0.889px;">20</div>
<div class="t" style="left:704.9px;top:447.4px;color:#1e1e1e;font-size:9.5px;letter-spacing:-0.593px;">OpenGLVersion</div>
<div class="t" style="left:845px;top:447.4px;color:#1e1e1e;font-size:9.5px;font-weight:bold;letter-spacing:-0.670px;">OpenGL2_1</div>
<div class="t" style="left:704.9px;top:461.7px;color:#1e1e1e;font-size:9.5px;letter-spacing:-0.429px;">RenderContextType</div>
<div class="t" style="left:845px;top:461.7px;color:#1e1e1e;font-size:9.5px;font-weight:bold;letter-spacing:-0.419px;">DIBSection</div>
<div class="t" style="left:704.9px;top:476px;color:#1e1e1e;font-size:9.5px;letter-spacing:-0.439px;">RenderTrigger</div>
<div class="t" style="left:845px;top:476px;color:#1e1e1e;font-size:9.5px;font-weight:bold;letter-spacing:-0.532px;">TimerBased</div>
<div class="t" style="left:1019px;top:62.5px;color:#444;font-size:9.5px;letter-spacing:-0.442px;transform-origin:0 0;transform:rotate(90deg);">Team Explorer</div>
<div class="t" style="left:1019px;top:126.4px;color:#444;font-size:9.5px;letter-spacing:-0.042px;transform-origin:0 0;transform:rotate(90deg);">Notifications</div>
<div class="t" style="left:1019px;top:186.8px;color:#444;font-size:9.5px;letter-spacing:-0.351px;transform-origin:0 0;transform:rotate(90deg);">Properties</div>
<div class="t" style="left:914px;top:555px;color:#fff;font-size:9px;letter-spacing:-0.772px;">ENG</div>
<div class="t" style="left:953.2px;top:548px;color:#fff;font-size:9px;letter-spacing:-0.408px;">6:29</div>
<div class="t" style="left:941px;top:561.7px;color:#fff;font-size:9px;letter-spacing:-0.405px;">25.10.2016</div>
<svg class="a" style="left:670px;top:172px;" width="280" height="46" viewBox="0 0 280 46"><ellipse cx="138" cy="22.6" rx="128.4" ry="14.4" fill="none" stroke="#e27a2b" stroke-width="3.7" transform="rotate(-0.3 138 22.6)"/></svg>
</div>
</body></html>
